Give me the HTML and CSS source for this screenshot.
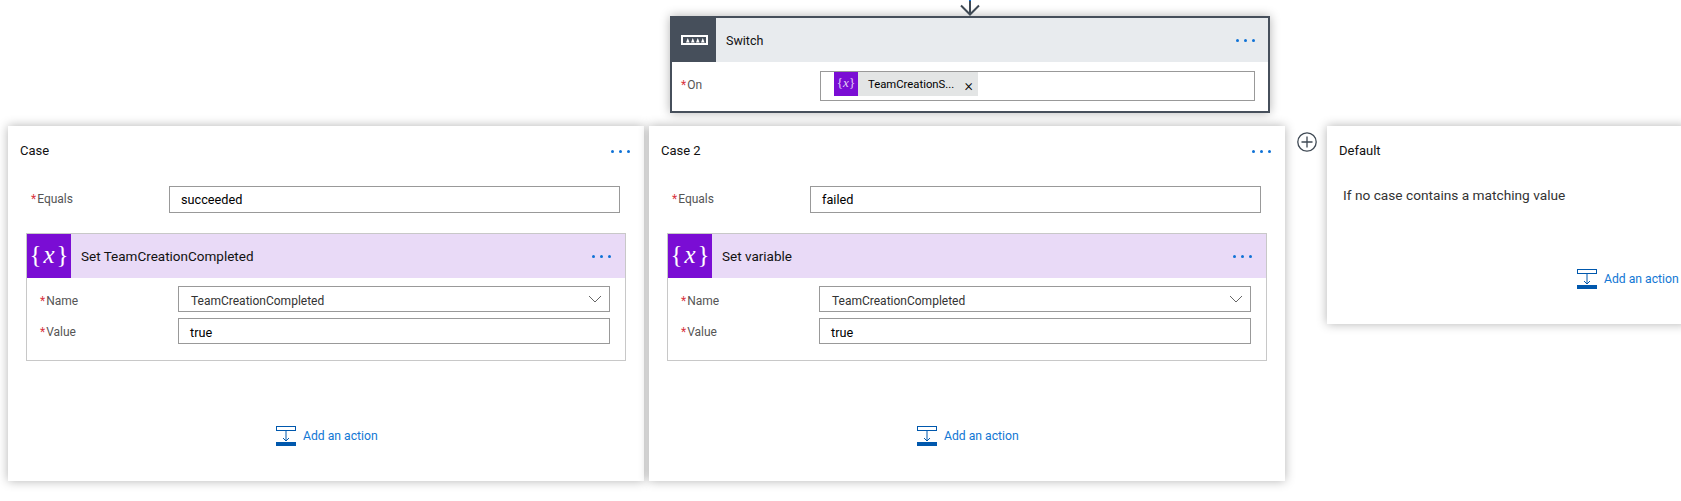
FILE: index.html
```html
<!DOCTYPE html>
<html lang="en">
  <head>
    <meta charset="UTF-8" />
    <title>Switch</title>
    <link rel="stylesheet" href="styles.css">
  </head>
  <body>
    <div class="arrow-row">
      <svg class="arrow" width="24" height="16" viewBox="0 0 24 16">
        <path d="M12 1V14M3 5.5L12 14.5L21 5.5" fill="none" stroke="#3f4954" stroke-width="2" />
        <path d="M12 0V1" stroke="#0f72d6" stroke-width="2" />
      </svg>
    </div>

    <div class="switch-card">
      <div class="switch-head">
        <div class="switch-icon">
          <svg width="27" height="10" viewBox="0 0 27 10">
            <rect x="1" y="1" width="25" height="8" fill="none" stroke="#fff" stroke-width="2" />
            <path d="M5 7.5L6.8 3L8.6 7.5ZM10 7.5L11.8 3L13.6 7.5ZM15 7.5L16.8 3L18.6 7.5ZM20 7.5L21.8 3L23.6 7.5Z" fill="#fff" />
          </svg>
        </div>
        <span class="head-title switch-title">Switch</span>
        <span class="dots"><i></i><i></i><i></i></span>
      </div>
      <div class="switch-body">
        <label class="field-label switch-label"><em>*</em>On</label>
        <div class="input token-input">
          <span class="token">
            <span class="token-icon">{<i>x</i>}</span>
            <span class="token-text">TeamCreationS...</span>
            <span class="token-close">×</span>
          </span>
        </div>
      </div>
    </div>

    <div class="cases">
      <div class="case-card">
        <div class="case-head">
          <span>Case</span>
          <span class="dots"><i></i><i></i><i></i></span>
        </div>
        <div class="equals-row">
          <label class="field-label"><em>*</em>Equals</label>
          <div class="input">succeeded</div>
        </div>
        <div class="action-card">
          <div class="action-head">
            <div class="action-icon">{<i>x</i>}</div>
            <span class="head-title">Set TeamCreationCompleted</span>
            <span class="dots"><i></i><i></i><i></i></span>
          </div>
          <div class="action-body">
            <div class="action-row name-row">
              <label class="field-label"><em>*</em>Name</label>
              <div class="input select">
                <span>TeamCreationCompleted</span>
                <svg width="14" height="8" viewBox="0 0 14 8"><path d="M1 1L7 7L13 1" fill="none" stroke="#666" /></svg>
              </div>
            </div>
            <div class="action-row">
              <label class="field-label"><em>*</em>Value</label>
              <div class="input">true</div>
            </div>
          </div>
        </div>
        <div class="add-action">
          <svg class="add-icon" width="20" height="20" viewBox="0 0 20 20">
            <rect x="0.5" y="0.5" width="19" height="4" fill="none" stroke="#0058ad" />
            <path d="M10 5V15M7 12L10 15L13 12" fill="none" stroke="#0058ad" />
            <rect y="16" width="20" height="4" fill="#0058ad" />
          </svg>
          <span>Add an action</span>
        </div>
      </div>

      <div class="case-card">
        <div class="case-head">
          <span>Case 2</span>
          <span class="dots"><i></i><i></i><i></i></span>
        </div>
        <div class="equals-row">
          <label class="field-label"><em>*</em>Equals</label>
          <div class="input">failed</div>
        </div>
        <div class="action-card">
          <div class="action-head">
            <div class="action-icon">{<i>x</i>}</div>
            <span class="head-title">Set variable</span>
            <span class="dots"><i></i><i></i><i></i></span>
          </div>
          <div class="action-body">
            <div class="action-row name-row">
              <label class="field-label"><em>*</em>Name</label>
              <div class="input select">
                <span>TeamCreationCompleted</span>
                <svg width="14" height="8" viewBox="0 0 14 8"><path d="M1 1L7 7L13 1" fill="none" stroke="#666" /></svg>
              </div>
            </div>
            <div class="action-row">
              <label class="field-label"><em>*</em>Value</label>
              <div class="input">true</div>
            </div>
          </div>
        </div>
        <div class="add-action">
          <svg class="add-icon" width="20" height="20" viewBox="0 0 20 20">
            <rect x="0.5" y="0.5" width="19" height="4" fill="none" stroke="#0058ad" />
            <path d="M10 5V15M7 12L10 15L13 12" fill="none" stroke="#0058ad" />
            <rect y="16" width="20" height="4" fill="#0058ad" />
          </svg>
          <span>Add an action</span>
        </div>
      </div>

      <div class="plus-col">
        <svg width="20" height="20" viewBox="0 0 20 20">
          <circle cx="10" cy="10" r="9.2" fill="#fff" stroke="#3f4954" stroke-width="1.3" />
          <path d="M10 4.5V15.5M4.5 10H15.5" stroke="#3f4954" stroke-width="1.3" />
        </svg>
      </div>

      <div class="default-card">
        <div class="case-head"><span>Default</span></div>
        <p class="default-note">If no case contains a matching value</p>
        <div class="add-action default-add">
          <svg class="add-icon" width="20" height="20" viewBox="0 0 20 20">
            <rect x="0.5" y="0.5" width="19" height="4" fill="none" stroke="#0058ad" />
            <path d="M10 5V15M7 12L10 15L13 12" fill="none" stroke="#0058ad" />
            <rect y="16" width="20" height="4" fill="#0058ad" />
          </svg>
          <span>Add an action</span>
        </div>
      </div>
    </div>
  </body>
</html>
```

FILE: styles.css
```css
* {
  margin: 0;
  padding: 0;
  box-sizing: border-box;
}

body {
  width: 1681px;
  height: 501px;
  overflow: hidden;
  background-color: #fff;
  font-family: Roboto, sans-serif;
  font-size: 12px;
  color: #111;
}

.arrow-row {
  height: 16px;
  padding-left: 958px;
}

.arrow {
  display: block;
}

.switch-card {
  width: 600px;
  height: 97px;
  margin-left: 670px;
  border: 2px solid #464f5b;
  background-color: #fff;
  box-shadow: 0 0 10px rgba(0, 0, 0, 0.3);
}

.switch-head {
  display: flex;
  align-items: center;
  height: 44px;
  background-color: #e8ebee;
}

.switch-icon {
  display: flex;
  align-items: center;
  justify-content: center;
  width: 44px;
  height: 100%;
  margin-right: 10px;
  background-color: #464f5b;
}

.head-title {
  flex: 1;
  font-size: 13.5px;
}

.switch-title {
  font-size: 12.5px;
}

.dots {
  display: flex;
  gap: 5px;
  padding-right: 14px;
}

.switch-head .dots {
  padding-right: 13px;
}

.dots i {
  width: 3px;
  height: 3px;
  border-radius: 50%;
  background-color: #0f72d6;
}

.switch-body {
  display: flex;
  align-items: center;
  padding: 9px 13px 0 9px;
}

.field-label {
  color: #555;
}

.field-label em {
  color: #d9333f;
  font-style: normal;
  margin-right: 1px;
}

.switch-label {
  width: 139px;
  padding-bottom: 2px;
}

.input {
  display: flex;
  align-items: center;
  flex: 1;
  height: 27px;
  padding-left: 11px;
  border: 1px solid #999;
  background-color: #fff;
  font-size: 12.7px;
  color: #000;
}

.token-input {
  align-items: flex-start;
  height: 30px;
  padding-left: 13px;
  font-size: 11.3px;
}

.token {
  display: flex;
  align-items: center;
  width: 144px;
  height: 24px;
  background-color: #e3e5e5;
}

.token-icon {
  width: 24px;
  height: 100%;
  margin-right: 10px;
  background-color: #7a0dd4;
  color: #e5d4f5;
  text-align: center;
  line-height: 22px;
  font-family: "Liberation Serif", serif;
  font-size: 13px;
}

.token-text {
  flex: 1;
  white-space: nowrap;
}

.token-close {
  padding: 3px 5px 0 0;
  font-size: 16px;
  font-weight: 300;
  line-height: 1;
}

.cases {
  display: flex;
  align-items: flex-start;
  gap: 5px;
  margin-top: 13px;
  padding-left: 8px;
}

.case-card {
  flex: none;
  width: 636px;
  height: 355px;
  background-color: #fff;
  box-shadow: 0 0 10px rgba(0, 0, 0, 0.3);
}

.case-head {
  display: flex;
  align-items: center;
  justify-content: space-between;
  height: 48px;
  padding-left: 12px;
  font-size: 13px;
}

.case-head .dots {
  padding-top: 2px;
}

.equals-row {
  display: flex;
  align-items: center;
  height: 28px;
  margin-top: 11px;
  padding: 0 24px 0 23px;
}

.equals-row .field-label {
  width: 138px;
}

.action-card {
  width: 600px;
  height: 128px;
  margin: 20px 0 0 18px;
  border: 1px solid #c8c8c8;
}

.action-head {
  display: flex;
  align-items: center;
  height: 44px;
  background-color: #e9daf7;
}

.action-icon {
  width: 44px;
  height: 100%;
  margin-right: 10px;
  background-color: #7a0dd4;
  color: #fff;
  text-align: center;
  line-height: 41px;
  font-family: "Liberation Serif", serif;
  font-size: 25px;
}

.action-icon i {
  margin: 0 2px;
}

.action-body {
  display: flex;
  flex-direction: column;
  gap: 6px;
  padding: 8px 15px 0 13px;
}

.action-row {
  display: flex;
  align-items: center;
  height: 26px;
}

.action-row .field-label {
  width: 138px;
  padding-top: 2px;
}

.name-row .field-label {
  padding-top: 4px;
}

.action-row .input {
  height: 26px;
  padding-top: 2px;
}

.action-row .select {
  justify-content: space-between;
  padding: 4px 7px 0 12px;
  font-size: 12px;
  color: #333;
}

.select svg {
  margin-top: -4px;
}

.add-action {
  display: flex;
  align-items: center;
  gap: 7px;
  margin: 65px 0 0 268px;
  font-size: 12.2px;
  color: #1277d4;
}

.add-icon {
  flex: none;
}

.plus-col {
  flex: none;
  width: 32px;
  padding: 6px 0 0 7px;
}

.default-card {
  flex: none;
  width: 360px;
  height: 198px;
  background-color: #fff;
  box-shadow: 0 0 10px rgba(0, 0, 0, 0.3);
}

.default-note {
  margin: 13px 0 0 16px;
  font-size: 13.7px;
  line-height: 16px;
  color: #333;
}

.default-add {
  margin: 66px 0 0 250px;
}
```
